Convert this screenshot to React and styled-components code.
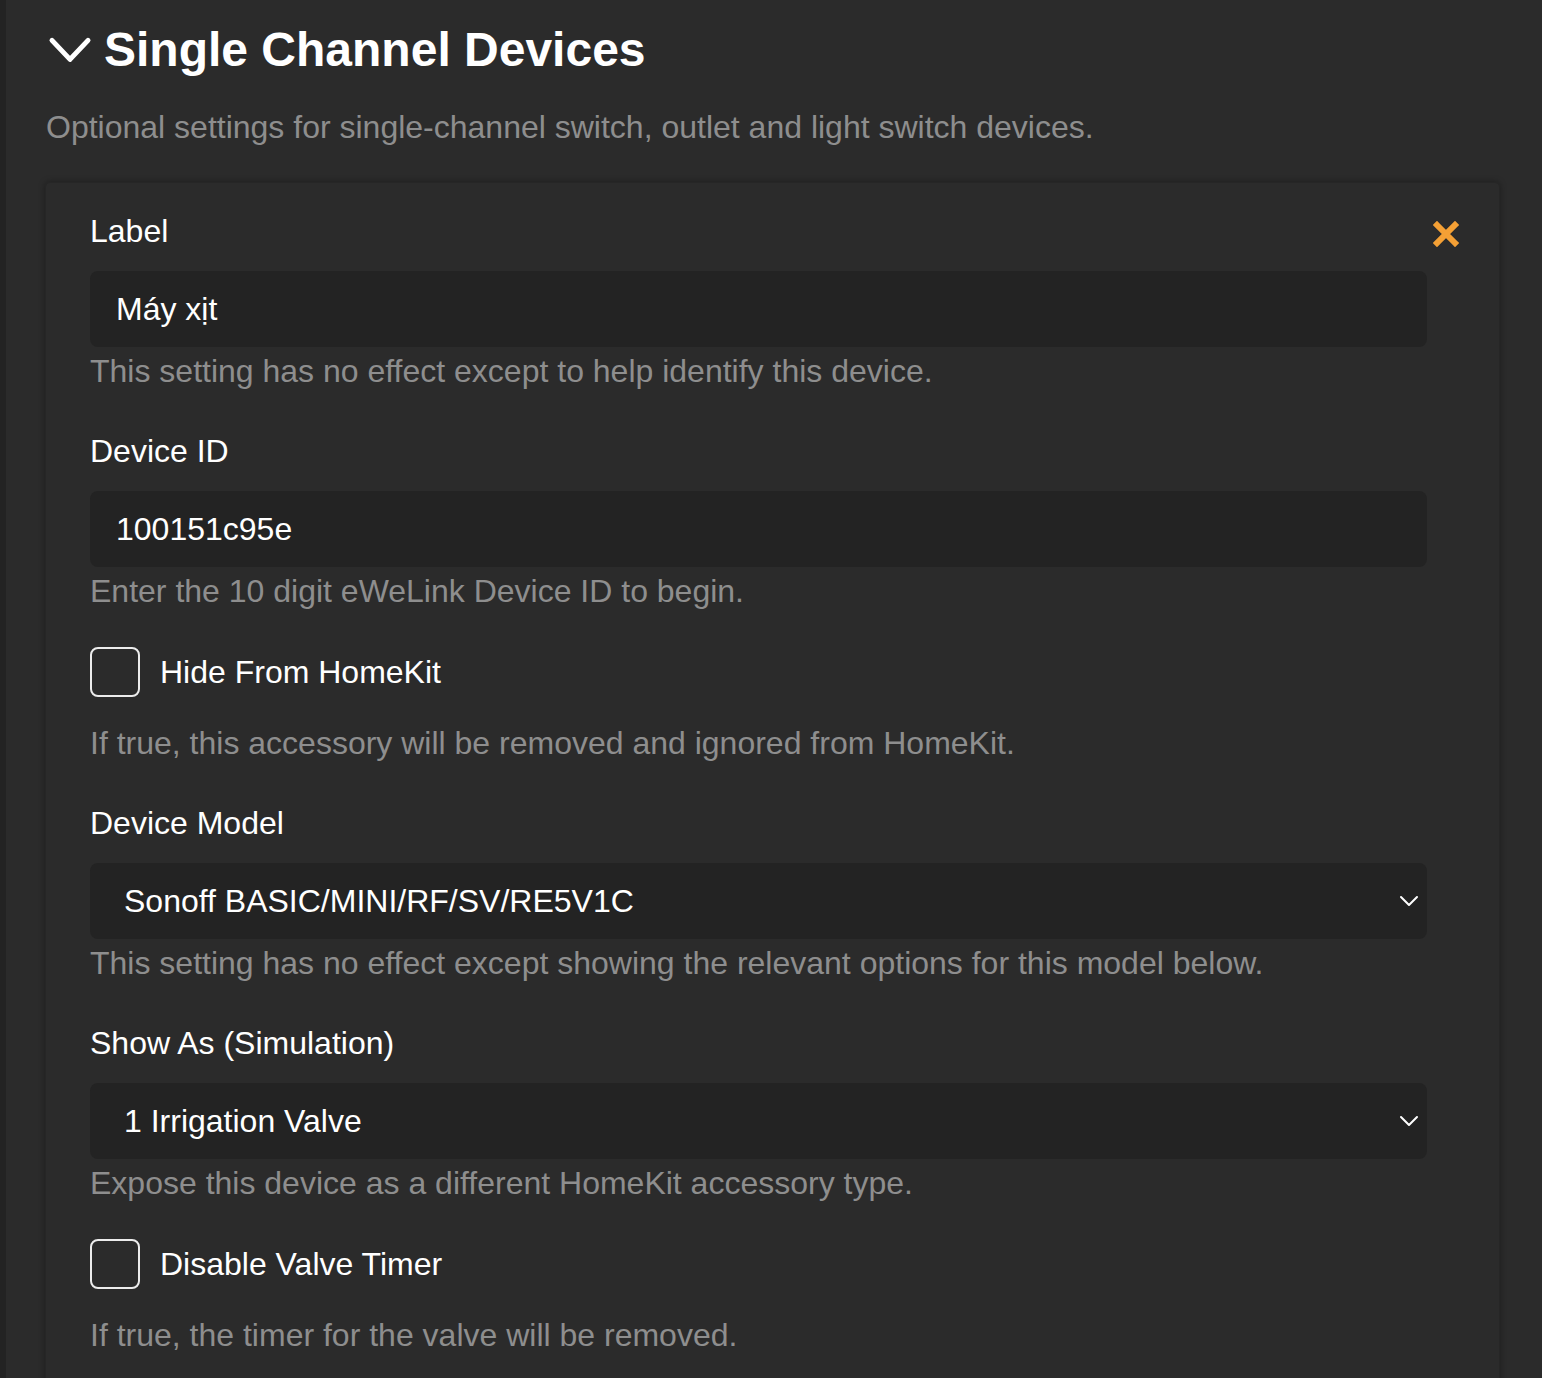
import React from 'react';
import styled, { createGlobalStyle } from 'styled-components';

const GlobalStyle = createGlobalStyle`
  html, body {
    margin: 0;
    padding: 0;
    background: #2b2b2b;
    overflow: hidden;
  }
  body {
    font-family: "Liberation Sans", Arial, sans-serif;
    color: #ffffff;
  }
`;

const Page = styled.div`
  min-height: 1378px;
  box-sizing: border-box;
  border-left: 6px solid #232323;
  padding: 22px 42px 0 39px;
`;

const Header = styled.div`
  display: flex;
  align-items: center;
  gap: 12px;
  height: 56px;
  padding-left: 3px;
`;

const Title = styled.h2`
  margin: 0;
  font-size: 48px;
  font-weight: 700;
  line-height: 56px;
  color: #ffffff;
`;

const Subtitle = styled.p`
  margin: 25px 0 31px;
  padding-left: 1px;
  font-size: 32px;
  line-height: 48px;
  color: #8e8e8e;
`;

const Card = styled.div`
  display: flex;
  gap: 6px;
  box-sizing: border-box;
  border: 1px solid #262626;
  border-radius: 5px;
  box-shadow: 0 0 6px rgba(0, 0, 0, 0.35);
  padding: 24px 40px 24px 44px;
`;

const Form = styled.div`
  flex: 1;
  display: flex;
  flex-direction: column;
`;

const CloseButton = styled.button`
  margin-top: 14px;
  width: 26px;
  height: 26px;
  padding: 0;
  border: none;
  background: none;
  display: flex;
  align-items: center;
  justify-content: center;
  cursor: pointer;
`;

const Group = styled.div`
  display: flex;
  flex-direction: column;
  margin-bottom: ${(p) => p.$gap || 32}px;
`;

const Label = styled.label`
  font-size: 32px;
  line-height: 48px;
  color: #ffffff;
  margin-bottom: 16px;
`;

const Input = styled.input`
  box-sizing: border-box;
  height: 76px;
  width: 100%;
  border: none;
  border-radius: 8px;
  background: #232323;
  color: #ffffff;
  font-family: "Liberation Sans", Arial, sans-serif;
  font-size: 32px;
  padding: 0 26px;
  outline: none;
`;

const SelectBox = styled.div`
  box-sizing: border-box;
  height: 76px;
  border-radius: 8px;
  background: #232323;
  display: flex;
  align-items: center;
  justify-content: space-between;
  padding: 0 8px 0 34px;
  font-size: 32px;
  color: #ffffff;
`;

const Help = styled.div`
  font-size: 32px;
  line-height: 48px;
  color: #8e8e8e;
`;

const CheckRow = styled.label`
  display: flex;
  align-items: center;
  gap: 20px;
  font-size: 32px;
  line-height: 50px;
  color: #ffffff;
  margin-bottom: 22px;
`;

const Box = styled.span`
  box-sizing: border-box;
  width: 50px;
  height: 50px;
  border: 2px solid #ececec;
  border-radius: 8px;
`;

const Chevron = ({ size = 44, stroke = 5 }) => (
  <svg width={size} height={size * 0.7} viewBox="0 0 44 30" fill="none">
    <path d="M4 5 L22 24 L40 5" stroke="#fff" strokeWidth={stroke} strokeLinecap="round" strokeLinejoin="round" />
  </svg>
);

const SmallChevron = () => (
  <svg width="20" height="12" viewBox="0 0 20 12" fill="none">
    <path d="M2 2 L10 10 L18 2" stroke="#fff" strokeWidth="2" strokeLinecap="round" strokeLinejoin="round" />
  </svg>
);

const Times = () => (
  <svg width="26" height="26" viewBox="0 0 26 26">
    <path d="M4 4 L22 22 M22 4 L4 22" stroke="#f4a035" strokeWidth="6" strokeLinecap="square" />
  </svg>
);

function Field({ label, help, children }) {
  return (
    <Group>
      <Label>{label}</Label>
      {children}
      <Help>{help}</Help>
    </Group>
  );
}

function Check({ label, help }) {
  return (
    <Group>
      <CheckRow>
        <Box />
        {label}
      </CheckRow>
      <Help>{help}</Help>
    </Group>
  );
}

export default function App() {
  return (
    <Page>
      <GlobalStyle />
      <Header>
        <Chevron />
        <Title>Single Channel Devices</Title>
      </Header>
      <Subtitle>Optional settings for single-channel switch, outlet and light switch devices.</Subtitle>
      <Card>
        <Form>
          <Field label="Label" help="This setting has no effect except to help identify this device.">
            <Input defaultValue="Máy xịt" />
          </Field>
          <Field label="Device ID" help="Enter the 10 digit eWeLink Device ID to begin.">
            <Input defaultValue="100151c95e" />
          </Field>
          <Check label="Hide From HomeKit" help="If true, this accessory will be removed and ignored from HomeKit." />
          <Field label="Device Model" help="This setting has no effect except showing the relevant options for this model below.">
            <SelectBox>
              <span>Sonoff BASIC/MINI/RF/SV/RE5V1C</span>
              <SmallChevron />
            </SelectBox>
          </Field>
          <Field label="Show As (Simulation)" help="Expose this device as a different HomeKit accessory type.">
            <SelectBox>
              <span>1 Irrigation Valve</span>
              <SmallChevron />
            </SelectBox>
          </Field>
          <Check label="Disable Valve Timer" help="If true, the timer for the valve will be removed." />
        </Form>
        <CloseButton aria-label="Remove">
          <Times />
        </CloseButton>
      </Card>
    </Page>
  );
}
